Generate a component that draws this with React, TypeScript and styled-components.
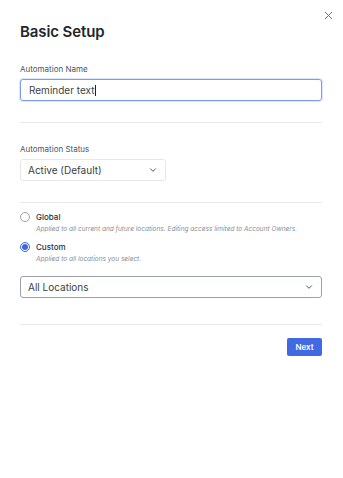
import styled, { createGlobalStyle } from "styled-components";

const GlobalStyle = createGlobalStyle`
  html, body { margin: 0; padding: 0; background: #fff; }
  body { font-family: Inter, "Noto Sans", "Liberation Sans", sans-serif; color: #1f2329; }
  * { box-sizing: border-box; }
`;

const Modal = styled.div`
  position: relative;
  width: 343px;
  height: 478px;
  padding: 22px 21px 0 20px;
  background: #fff;
`;

const CloseButton = styled.button`
  position: absolute;
  top: 9px;
  right: 9px;
  width: 12px;
  height: 12px;
  padding: 0;
  border: 0;
  background: none;
  display: flex;
  align-items: center;
  justify-content: center;
`;

const Title = styled.h1`
  margin: 0;
  font-size: 15px;
  font-weight: 600;
  line-height: 20px;
  letter-spacing: -0.1px;
  color: #23262b;
`;

const Section = styled.div<{ $top: number; $bottom: number }>`
  padding-top: ${(p) => p.$top}px;
  padding-bottom: ${(p) => p.$bottom}px;
  border-bottom: 1px solid #e6e9ee;
`;

const Label = styled.div`
  font-size: 8px;
  line-height: 10px;
  color: #4b5563;
  margin-bottom: 5px;
`;

const TextInput = styled.div`
  height: 22px;
  border: 1px solid #7c9cf0;
  border-radius: 3px;
  box-shadow: 0 0 0 1px #dbe5fd;
  padding: 0 8px;
  display: flex;
  align-items: center;
  font-size: 10px;
  color: #3a3f46;
`;

const Caret = styled.span`
  display: inline-block;
  width: 1px;
  height: 11px;
  background: #222;
  margin-left: 1px;
`;

const Select = styled.div<{ $width?: number; $strong?: boolean }>`
  width: ${(p) => (p.$width ? `${p.$width}px` : "100%")};
  height: 22px;
  border: 1px solid ${(p) => (p.$strong ? "#9aa1ab" : "#e4e7eb")};
  border-radius: 3px;
  padding: 0 8px 0 7px;
  display: flex;
  align-items: center;
  justify-content: space-between;
  font-size: 10px;
  color: #3a3f46;
`;

const RadioGroup = styled.div`
  display: flex;
  flex-direction: column;
  gap: 8px;
`;

const RadioRow = styled.div`
  display: grid;
  grid-template-columns: 10px 1fr;
  column-gap: 6px;
  row-gap: 3px;
  align-items: center;
`;

const RadioCircle = styled.span<{ $checked?: boolean }>`
  width: 10px;
  height: 10px;
  border-radius: 50%;
  border: 1px solid ${(p) => (p.$checked ? "#3b66e0" : "#9ca3af")};
  display: flex;
  align-items: center;
  justify-content: center;
  &::after {
    content: "";
    width: 6px;
    height: 6px;
    border-radius: 50%;
    background: ${(p) => (p.$checked ? "#3b66e0" : "transparent")};
  }
`;

const RadioTitle = styled.span`
  font-size: 8px;
  font-weight: 500;
  color: #2a2f36;
  line-height: 10px;
`;

const RadioHint = styled.span`
  grid-column: 2;
  font-size: 6.5px;
  font-style: italic;
  color: #8a9099;
  line-height: 9px;
`;

const Spacer = styled.div`
  height: 12px;
`;

const Footer = styled.div`
  display: flex;
  justify-content: flex-end;
  padding-top: 13px;
`;

const NextButton = styled.button`
  width: 35px;
  height: 18px;
  border: 0;
  border-radius: 2px;
  background: #4169e1;
  color: #fff;
  font-family: inherit;
  font-size: 8px;
  font-weight: 600;
  padding: 0;
`;

const Chevron = () => (
  <svg width="8" height="8" viewBox="0 0 8 8" fill="none">
    <path d="M1.5 2.8 4 5.3 6.5 2.8" stroke="#4b5563" strokeWidth="1" strokeLinecap="round" strokeLinejoin="round" />
  </svg>
);

export default function App() {
  return (
    <>
      <GlobalStyle />
      <Modal>
        <CloseButton aria-label="Close">
          <svg width="9" height="9" viewBox="0 0 9 9">
            <path d="M1 1 8 8M8 1 1 8" stroke="#6b7280" strokeWidth="1" />
          </svg>
        </CloseButton>
        <Title>Basic Setup</Title>

        <Section $top={22} $bottom={21}>
          <Label>Automation Name</Label>
          <TextInput>
            Reminder text<Caret />
          </TextInput>
        </Section>

        <Section $top={21} $bottom={21}>
          <Label>Automation Status</Label>
          <Select $width={146}>
            Active (Default) <Chevron />
          </Select>
        </Section>

        <Section $top={9} $bottom={26}>
          <RadioGroup>
            <RadioRow>
              <RadioCircle />
              <RadioTitle>Global</RadioTitle>
              <RadioHint>
                Applied to all current and future locations. Editing access limited to Account Owners.
              </RadioHint>
            </RadioRow>
            <RadioRow>
              <RadioCircle $checked />
              <RadioTitle>Custom</RadioTitle>
              <RadioHint>Applied to all locations you select.</RadioHint>
            </RadioRow>
          </RadioGroup>
          <Spacer />
          <Select $strong>
            All Locations <Chevron />
          </Select>
        </Section>

        <Footer>
          <NextButton>Next</NextButton>
        </Footer>
      </Modal>
    </>
  );
}
